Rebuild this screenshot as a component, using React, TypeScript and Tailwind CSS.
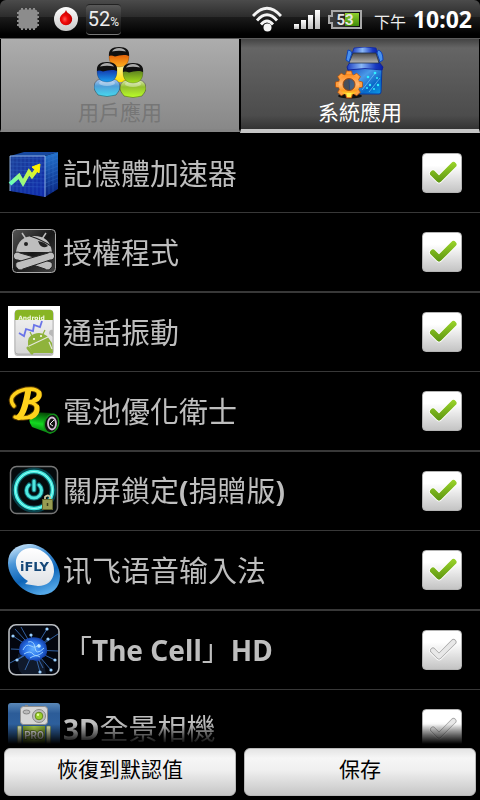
import { useState, type ReactNode } from "react";

const CJK = "font-['Noto_Sans_CJK_TC','Noto_Sans_CJK_SC',sans-serif]";
const LATIN = "font-['Noto_Sans','Open_Sans',sans-serif] font-bold";

/* ---------- Status bar ---------- */

function ChipIcon() {
  const n = [20, 24, 28, 32];
  return (
    <svg viewBox="0 0 22 22" className="size-[22px]" aria-hidden="true">
      <rect x="1.5" y="1.5" width="19" height="19" rx="3" fill="#8c8c8c" />
      {n.map((p) => (
        <g key={p} fill="#8c8c8c">
          <rect x={p - 16} y="0" width="2" height="22" />
          <rect x="0" y={p - 16} width="22" height="2" />
        </g>
      ))}
    </svg>
  );
}

function DropIcon() {
  return (
    <svg viewBox="0 0 24 24" className="size-6" aria-hidden="true">
      <defs>
        <linearGradient id="dropRing" x1="0" y1="0" x2="0" y2="1">
          <stop offset="0" stopColor="#fff" />
          <stop offset="1" stopColor="#c8c8c8" />
        </linearGradient>
        <radialGradient id="dropRed" cx=".4" cy=".6" r=".6">
          <stop offset="0" stopColor="#ff5a55" />
          <stop offset=".4" stopColor="#f00808" />
          <stop offset="1" stopColor="#b80000" />
        </radialGradient>
      </defs>
      <circle cx="12" cy="12" r="12" fill="url(#dropRing)" />
      <path d="M12 3 C12.500 5 14 6 15.500 7 A6.200 6.200 0 1 1 8.500 7 C10 6 11.500 5 12 3Z" fill="url(#dropRed)" />
    </svg>
  );
}

function WifiIcon() {
  return (
    <svg viewBox="0 0 30 27" className="h-[27px] w-[30px]" fill="none" stroke="#f4f4f4" strokeWidth="2.8" aria-hidden="true">
      <path d="M1 10 Q15 -5.500 29 10" />
      <path d="M5 14.500 Q15 3 25 14.500" />
      <path d="M9 18.500 Q15 11.500 21 18.500" />
      <circle cx="15.500" cy="21.500" r="4" fill="#f4f4f4" stroke="none" />
    </svg>
  );
}

function SignalIcon() {
  return (
    <svg viewBox="0 0 26 19" className="h-[19px] w-[26px]" aria-hidden="true">
      <defs>
        <linearGradient id="sig" x1="0" y1="0" x2="0" y2="1">
          <stop offset="0" stopColor="#fff" />
          <stop offset="1" stopColor="#bdbdbd" />
        </linearGradient>
      </defs>
      <g fill="url(#sig)">
        <rect x="0" y="14" width="5" height="5" />
        <rect x="7" y="10" width="5" height="9" />
        <rect x="14" y="5" width="5" height="14" />
        <rect x="21" y="0" width="5" height="19" />
      </g>
    </svg>
  );
}

function BatteryIcon() {
  return (
    <svg viewBox="0 0 34 19" className="h-[19px] w-[34px]" aria-hidden="true">
      <defs>
        <linearGradient id="batG" x1="0" y1="0" x2="0" y2="1">
          <stop offset="0" stopColor="#8ed02e" />
          <stop offset="1" stopColor="#3f8a08" />
        </linearGradient>
        <linearGradient id="batK" x1="0" y1="0" x2="1" y2="0">
          <stop offset="0" stopColor="#444" />
          <stop offset="1" stopColor="#080808" />
        </linearGradient>
      </defs>
      <path d="M4 1 H33 V18 H4 V13 H1 V6 H4Z" fill="url(#batK)" stroke="#a8a8a8" strokeWidth="2" />
      <rect x="17" y="3" width="14" height="13" fill="url(#batG)" />
      <text x="17" y="15" textAnchor="middle" fontSize="15" fontWeight="700" fontFamily="Roboto, sans-serif" fill="#e6e6e6">53</text>
    </svg>
  );
}

function StatusBar() {
  return (
    <header className="flex h-[39px] shrink-0 items-center rounded-t-md border-b border-[#5c5c5c] bg-[linear-gradient(#4b4b4b,#2c2c2c_44%,#1b1b1b_46%,#000_90%)] pr-2 pl-[17px]">
      <ChipIcon />
      <span className="ml-[15px] flex"><DropIcon /></span>
      <span className="ml-2 flex h-[31px] w-[35px] items-baseline justify-center rounded border-t border-b border-t-[#222] border-b-[#777] bg-linear-to-b from-[#5a5a5a] to-[#080808] font-['Roboto',sans-serif] text-xl leading-7 text-[#eee]">
        52<span className="text-xs">%</span>
      </span>
      <div className="ml-auto flex items-center">
        <WifiIcon />
        <span className="ml-3 flex"><SignalIcon /></span>
        <span className="ml-2 flex"><BatteryIcon /></span>
        <span className={`${CJK} ml-3 pt-1 text-base leading-6 text-[#eee]`}>下午</span>
        <span className={`${LATIN} ml-[7px] text-[23px] leading-6 text-white`}>10:02</span>
      </div>
    </header>
  );
}

/* ---------- Tab icons ---------- */

function Person({ x, y, id, id2 }: { x: number; y: number; id: string; id2: string }) {
  return (
    <g transform={`translate(${x} ${y})`}>
      <path d="M7 17 C1 18 0 22 0 26 C1 30 3 31 4 33 Q13 36 22 33 C23 31 25 30 26 26 C26 22 25 18 19 17Z" fill={`url(#${id2})`} stroke="#0006" strokeWidth=".8" />
      <ellipse cx="13" cy="21" rx="8" ry="3" fill="#fff" opacity=".35" />
      <path d="M3 9 Q3 1 13 1 Q23 1 23 9 Q23 20 13 20 Q3 20 3 9Z" fill={`url(#${id})`} stroke="#0005" strokeWidth=".6" />
      <path d="M3 9 Q2 0 13 0 Q24 0 23 9 L20 8 Q14 7.500 9 9.500 Q5 8 3 9Z" fill="#101010" />
      <path d="M6 4.500 Q8 1 13 1 Q18 1 20 4.500 Q13 3 6 4.500Z" fill="#ddd" opacity=".75" />
    </g>
  );
}

function UsersIcon() {
  return (
    <svg viewBox="0 0 52 52" className="size-[52px]" aria-hidden="true">
      <defs>
        <linearGradient id="uo" x1="0" y1="0" x2="0" y2="1"><stop offset=".3" stopColor="#e05a08" /><stop offset="1" stopColor="#ffb01e" /></linearGradient>
        <linearGradient id="uy" x1="0" y1="0" x2="0" y2="1"><stop offset="0" stopColor="#fff3a0" /><stop offset="1" stopColor="#ffe000" /></linearGradient>
        <linearGradient id="ub" x1="0" y1="0" x2="0" y2="1"><stop offset=".3" stopColor="#1230a8" /><stop offset="1" stopColor="#1da0f0" /></linearGradient>
        <linearGradient id="uc" x1="0" y1="0" x2="0" y2="1"><stop offset="0" stopColor="#b8c8ee" /><stop offset=".4" stopColor="#4f9fd8" /><stop offset="1" stopColor="#48d8ee" /></linearGradient>
        <linearGradient id="ug" x1="0" y1="0" x2="0" y2="1"><stop offset=".3" stopColor="#587a20" /><stop offset="1" stopColor="#a4e01c" /></linearGradient>
        <linearGradient id="ul" x1="0" y1="0" x2="0" y2="1"><stop offset="0" stopColor="#dcecb4" /><stop offset=".4" stopColor="#94bf30" /><stop offset="1" stopColor="#baff28" /></linearGradient>
      </defs>
      <path d="M18 18 H33 V35 H18Z" fill="url(#uy)" />
      <g transform="translate(12 0)">
        <path d="M3 9 Q3 1 13 1 Q23 1 23 9 Q23 20 13 20 Q3 20 3 9Z" fill="url(#uo)" stroke="#0005" strokeWidth=".6" />
        <path d="M3 9 Q2 0 13 0 Q24 0 23 9 L20 8 Q14 7.500 9 9.500 Q5 8 3 9Z" fill="#101010" />
        <path d="M6 4.500 Q8 1 13 1 Q18 1 20 4.500 Q13 3 6 4.500Z" fill="#ddd" opacity=".75" />
      </g>
      <Person x={0} y={15} id="ub" id2="uc" />
      <Person x={26} y={16} id="ug" id2="ul" />
    </svg>
  );
}

function TruckGearIcon() {
  const teeth = [0, 45, 90, 135, 180, 225, 270, 315];
  return (
    <svg viewBox="0 0 52 52" className="size-[52px]" aria-hidden="true">
      <defs>
        <linearGradient id="trk" x1="0" y1="0" x2="1" y2="1"><stop offset="0" stopColor="#1440b8" /><stop offset=".4" stopColor="#4a9ae8" /><stop offset=".7" stopColor="#0868c8" /><stop offset="1" stopColor="#0aa0e8" /></linearGradient>
        <linearGradient id="hood" x1="0" y1="0" x2="1" y2="0"><stop offset="0" stopColor="#1a3cc0" /><stop offset=".4" stopColor="#8ab8f6" /><stop offset=".8" stopColor="#1838c0" /><stop offset="1" stopColor="#0820a8" /></linearGradient>
        <linearGradient id="win" x1="0" y1="0" x2="0" y2="1"><stop offset="0" stopColor="#4a4a4a" /><stop offset="1" stopColor="#b4b4b4" /></linearGradient>
        <linearGradient id="gear" x1="0" y1="0" x2="0" y2="1"><stop offset="0" stopColor="#ff8a18" /><stop offset=".5" stopColor="#ffb878" /><stop offset=".8" stopColor="#ff9a20" /><stop offset="1" stopColor="#ffee30" /></linearGradient>
      </defs>
      <path d="M14 20 H48 L47 45 Q47 47 45 47 H16Z" fill="url(#trk)" stroke="#0838a0" />
      <path d="M20 1 Q31 -1 42 1 L44 7 H18Z" fill="url(#hood)" stroke="#1428a0" strokeWidth=".8" />
      <path d="M16 15 H45 L49 20 L48 23 Q31 20 14 23 L13 20Z" fill="url(#hood)" stroke="#0c1c98" strokeWidth=".8" />
      <path d="M19 6 H42 L45 16 H15Z" fill="url(#win)" stroke="#20304a" strokeWidth=".8" />
      <path d="M14 3 Q17 3 18 6 L15 15 L12 13Z M44 3 Q49 4 49 13 L46 15 L43 6Z" fill="#4a92ee" stroke="#1044b8" />
      <path d="M28 43 L42 25 M35 45 L46 31" stroke="#7fd0ff" strokeWidth="1" opacity=".6" />
      <g fill="#30f0ff"><circle cx="41" cy="26" r="1.300" /><circle cx="34" cy="30" r="1.300" /><circle cx="43" cy="31" r="1" /><circle cx="36" cy="38" r="1.200" /><circle cx="44" cy="38" r="1.200" /><circle cx="40" cy="42" r="1" /><circle cx="33" cy="41" r="1" /></g>
      <ellipse cx="16" cy="49" rx="12" ry="2.500" fill="#111" />
      <g fill="url(#gear)">
        {teeth.map((a) => <path key={a} d="M11.500 28 L12.500 24 H17.500 L18.500 28Z" transform={`rotate(${a} 15 37.500)`} fill="#ffa040" stroke="#b84c00" strokeWidth=".7" />)}
        <path fillRule="evenodd" d="M15 27 A10.500 10.500 0 1 0 15 48 A10.500 10.500 0 1 0 15 27Z M15 31.500 A6 6 0 1 1 15 43.500 A6 6 0 1 1 15 31.500Z" />
      </g>
      <circle cx="15" cy="37.500" r="6" fill="#444c58" fillOpacity=".7" stroke="#a84a08" />
      <path d="M12.500 46 H17.500 L17 50 H13Z" fill="#fff04a" />
    </svg>
  );
}

/* ---------- Application icons ---------- */

const iconClass = "size-[52px] shrink-0";

function BoosterIcon() {
  const g = [5, 9, 13, 17, 21, 25, 29, 33];
  return (
    <svg viewBox="0 0 52 52" className={iconClass} aria-hidden="true">
      <defs>
        <linearGradient id="cf" x1="0" y1="0" x2="1" y2="1"><stop offset="0" stopColor="#1c3f96" /><stop offset="1" stopColor="#102cac" /></linearGradient>
        <linearGradient id="cs" x1="0" y1="0" x2="0" y2="1"><stop offset="0" stopColor="#2272cc" /><stop offset="1" stopColor="#08207c" /></linearGradient>
        <linearGradient id="ar" gradientUnits="userSpaceOnUse" x1="2" y1="36" x2="32" y2="20"><stop offset="0" stopColor="#66ffc0" /><stop offset="1" stopColor="#fff200" /></linearGradient>
      </defs>
      <path d="M2 9 L16 5 L50 5 L37 9Z" fill="#1648a0" />
      <path d="M2 9 H37 V50 L2 44Z" fill="url(#cf)" />
      <path d="M37 9 L50 5 V42 L37 50Z" fill="url(#cs)" />
      <g stroke="#4580d8" strokeWidth=".5" opacity=".55">
        {g.map((v) => <path key={v} d={`M${v} 9 V${44 + v / 7} M2 ${v + 6} L37 ${v + 7} L50 ${v + 2}`} fill="none" />)}
        <path d="M41 8 V47 M45 7 V45" />
      </g>
      <path d="M2 44 V9 H37 V50" fill="none" stroke="#9cc0ee" strokeWidth=".9" />
      <path d="M2 37 L11 29 L15 36 L21 25 L24 29 L30 21" fill="none" stroke="url(#ar)" strokeWidth="4" />
      <path d="M24 20 L32 17 L31 26Z" fill="#fff200" stroke="#fff200" />
    </svg>
  );
}

function PirateIcon() {
  return (
    <svg viewBox="0 0 52 52" className={iconClass} aria-hidden="true">
      <defs><linearGradient id="pb" x1="0" y1="0" x2="1" y2="1"><stop offset="0" stopColor="#555" /><stop offset=".5" stopColor="#171717" /><stop offset="1" stopColor="#444" /></linearGradient></defs>
      <rect x="4.500" y="3.500" width="43" height="43" rx="4" fill="url(#pb)" stroke="#aaa" />
      <g stroke="#bebebe" fill="#bebebe">
        <path d="M14 7 L18 13 M38 7 L34 13" strokeWidth="1.500" />
        <path d="M8 26 Q10 10 26 10 Q42 10 44 26Z" stroke="none" />
      </g>
      <path d="M22 10 Q34 14 43 20" stroke="#222" strokeWidth="1.200" fill="none" />
      <path d="M30 15 Q37 16 40 20 Q33 24 30 15Z" fill="#222" />
      <circle cx="18" cy="18" r="2" fill="#222" />
      <g fill="#bebebe" stroke="#252525" strokeWidth="1">
        <path d="M12 27 L43 36 A4 4 0 0 1 43 42 A4 4 0 0 1 37 43 L10 34 A4 4 0 1 1 12 27Z" />
        <path d="M40 27 L9 36 A4 4 0 0 0 9 42 A4 4 0 0 0 15 43 L42 34 A4 4 0 1 0 40 27Z" />
      </g>
    </svg>
  );
}

function VibrateIcon() {
  return (
    <svg viewBox="0 0 52 52" className={iconClass} aria-hidden="true">
      <defs><linearGradient id="vb" x1="0" y1="0" x2="0" y2="1"><stop offset="0" stopColor="#f4f4f4" /><stop offset="1" stopColor="#d6d6d6" /></linearGradient></defs>
      <rect width="52" height="52" fill="#fff" />
      <rect x="6.500" y="5" width="39" height="45" rx="3" fill="#9a9a9a" opacity=".6" />
      <rect x="7" y="4" width="38" height="44" rx="3" fill="url(#vb)" stroke="#999" strokeWidth=".6" />
      <path d="M7 14 V7 Q7 4 10 4 H42 Q45 4 45 7 V14Z" fill="#88b524" />
      <text x="23.500" y="13.500" textAnchor="middle" fontSize="6" fontWeight="700" fontFamily="DejaVu Sans, sans-serif" fill="#f2f8e0">Android</text>
      <path d="M11 27 L16 30 L18 23 L25 25 L26 19 L32 21 L34 15" fill="none" stroke="#6a74e8" strokeWidth="1.800" />
      <path d="M41 28 Q41 23 45 24 V31Z" fill="#b8b8b8" />
      <g fill="#8fb33c">
        <path d="M20 39 Q19 30 26 28 Q33 25 39 30 L44 37 L45 47 H25Z" />
        <path d="M24 30 L22 26 M35 28 L37 24" stroke="#8fb33c" strokeWidth="1.200" />
        <path d="M20 42 L24 47" stroke="#8fb33c" strokeWidth="3" strokeLinecap="round" />
      </g>
      <path d="M21 40 L40 31 M41 36 L44 43" stroke="#e4e8dc" strokeWidth="1.200" />
      <circle cx="26" cy="33" r="1" fill="#fff" /><circle cx="33" cy="30" r="1" fill="#fff" />
    </svg>
  );
}

function BatteryGuardIcon() {
  return (
    <svg viewBox="0 0 52 52" className={iconClass} aria-hidden="true">
      <defs><linearGradient id="bg" x1=".3" y1="0" x2=".1" y2="1"><stop offset="0" stopColor="#064c06" /><stop offset=".5" stopColor="#12d820" /><stop offset="1" stopColor="#045c08" /></linearGradient></defs>
      <path d="M23 27 L43 28 L50 35 L43 49 L24 42 Q19 35 23 27Z" fill="url(#bg)" />
      <ellipse cx="43.500" cy="38.500" rx="7" ry="9.500" transform="rotate(15 43.500 38.500)" fill="#111" stroke="#118c18" strokeWidth="1.500" />
      <ellipse cx="44" cy="38.500" rx="4" ry="6" fill="none" stroke="#d8bfd8" strokeWidth="1.800" />
      <path d="M46 35 L42 39 L45 41" stroke="#eee" fill="none" />
      <g fill="none" strokeLinecap="round">
        <path d="M6 21 C-2 12 10 4 23 4 C37 5 32 17 20 17 C35 18 29 33 15 33 Q9 33 7 32" stroke="#5a3a00" strokeWidth="5.500" />
        <path d="M6 21 C-2 12 10 4 23 4 C37 5 32 17 20 17 C35 18 29 33 15 33 Q9 33 7 32" stroke="#ffd21c" strokeWidth="3.500" />
        <path d="M31 8 Q32 13 27 15 M29 22 Q30 29 23 32" stroke="#ffd21c" strokeWidth="5" />
        <path d="M20 7 C18 18 16 28 11 32" stroke="#ffd21c" strokeWidth="6" />
      </g>
    </svg>
  );
}

function ScreenLockIcon() {
  return (
    <svg viewBox="0 0 52 52" className={iconClass} aria-hidden="true">
      <rect x="2.500" y="1.500" width="47" height="47" rx="6" fill="#050a0c" stroke="#777" strokeWidth="1.500" />
      <circle cx="26" cy="25" r="19" fill="none" stroke="#0a5a66" strokeWidth="7" opacity=".7" />
      <circle cx="26" cy="25" r="18.500" fill="none" stroke="#3ce6dc" strokeWidth="3.500" />
      <circle cx="26" cy="25" r="18.500" fill="none" stroke="#9afff6" strokeWidth="1" />
      <g fill="none" strokeLinecap="round">
        <path d="M21 20 A7.500 7.500 0 1 0 31 20 M26 16 V25" stroke="#0a6670" strokeWidth="5" />
        <path d="M21 20 A7.500 7.500 0 1 0 31 20 M26 16 V25" stroke="#50e8e0" strokeWidth="3" />
      </g>
      <path d="M37 35 V32 Q40 29 42 32 V35" fill="none" stroke="#c6c6a0" strokeWidth="1.800" />
      <rect x="34.500" y="34.500" width="10" height="10" fill="#989d52" stroke="#62672e" />
      <path d="M39.500 38 V41" stroke="#3a3c1a" strokeWidth="1.500" />
    </svg>
  );
}

function FlyIcon() {
  return (
    <svg viewBox="0 0 52 52" className={iconClass} aria-hidden="true">
      <defs>
        <linearGradient id="fb" x1=".2" y1="0" x2=".6" y2="1"><stop offset="0" stopColor="#c9e4f8" /><stop offset=".3" stopColor="#4b96d8" /><stop offset=".65" stopColor="#0e65b8" /><stop offset="1" stopColor="#54a8e8" /></linearGradient>
        <linearGradient id="fw" x1="0" y1="0" x2="0" y2="1"><stop offset="0" stopColor="#fff" /><stop offset="1" stopColor="#dfe2e6" /></linearGradient>
      </defs>
      <path d="M20 0 C34 -1 51 15 52 32 C52 44 44 51 32 51 C15 50 0 34 0 19 C0 7 8 1 20 0Z" fill="url(#fb)" />
      <path d="M23 4 C36 4 47 16 46 28 C45 37 39 42 30 42 L17 40 L20 37 C11 32 7 23 8 16 C10 8 16 4 23 4Z" fill="url(#fw)" />
      <text x="26.500" y="27" textAnchor="middle" fontSize="13" fontWeight="700" fontFamily="DejaVu Sans, sans-serif" fill="#164878">iFLY</text>
    </svg>
  );
}

function CellIcon() {
  const rays = [[5, 12], [13, 3], [23, 11], [39, 5], [40, 15], [50, 10], [3, 25], [2, 39], [9, 36], [17, 46], [32, 48], [35, 44], [43, 46], [47, 36], [50, 27], [7, 5]];
  return (
    <svg viewBox="0 0 52 52" className={iconClass} aria-hidden="true">
      <defs><radialGradient id="br"><stop offset="0" stopColor="#62b0ff" /><stop offset=".6" stopColor="#2a74ec" /><stop offset="1" stopColor="#1440a8" /></radialGradient></defs>
      <rect x="1" y="0.800" width="50" height="50" rx="7" fill="#03060e" stroke="#b8bcc0" strokeWidth="1.600" />
      <path d="M10 30 Q8 45 14 50 H38 L35 35Z" fill="#101a2c" />
      {rays.map(([x, y]) => <path key={`${x}-${y}`} d={`M26 26 L${x} ${y}`} stroke="#3f78c8" strokeWidth=".8" />)}
      <g fill="#9ad0ff">{[[5, 12], [23, 11], [40, 15], [9, 36], [32, 48], [43, 46], [47, 36], [39, 5]].map(([x, y]) => <circle key={`${x}-${y}`} cx={x} cy={y} r="1.600" />)}</g>
      <path d="M11 27 Q11 18 18 15 Q24 12 31 14 Q39 17 39 25 Q40 32 34 34 Q31 39 25 36 Q19 37 17 32 Q11 32 11 27Z" fill="url(#br)" />
      <path d="M15 26 Q18 19 23 22 T31 20 M16 30 Q22 26 25 30 T35 28 M22 34 Q28 30 32 33 M20 18 Q26 16 27 24 T36 24" fill="none" stroke="#a6d8ff" strokeWidth=".9" />
      <circle cx="31" cy="22" r="1.800" fill="#c4ecff" />
    </svg>
  );
}

function PanoramaIcon() {
  return (
    <svg viewBox="0 0 52 52" className={iconClass} aria-hidden="true">
      <defs>
        <linearGradient id="pn" x1="0" y1="0" x2="0" y2="1"><stop offset="0" stopColor="#5a88b8" /><stop offset=".2" stopColor="#2c5c98" /><stop offset="1" stopColor="#3168a8" /></linearGradient>
        <linearGradient id="pg" x1="0" y1="0" x2="1" y2="0"><stop offset="0" stopColor="#7fa32c" /><stop offset=".5" stopColor="#b2d650" /><stop offset="1" stopColor="#7fa32c" /></linearGradient>
      </defs>
      <rect width="52" height="52" rx="3" fill="url(#pn)" />
      <path d="M17 4 V2 H20 V4" fill="#888" />
      <rect x="12.500" y="3.500" width="27" height="18" rx="3" fill="#d6d6d6" stroke="#8e8e8e" />
      <ellipse cx="18.500" cy="9" rx="3.500" ry="2" fill="#bbb" stroke="#777" strokeWidth=".8" />
      <circle cx="31" cy="13" r="6.500" fill="#bdbdbd" stroke="#888" />
      <circle cx="31" cy="13" r="3.800" fill="#9ad02c" stroke="#668820" />
      <circle cx="30" cy="11.800" r="1.200" fill="#e4ffa0" />
      <rect x="15" y="23" width="22" height="25" fill="url(#pg)" />
      <rect x="9.500" y="23" width="4" height="25" rx="1" fill="#e4eab8" stroke="#7a8c40" strokeWidth=".6" />
      <rect x="38.500" y="23" width="4" height="25" rx="1" fill="#e4eab8" stroke="#7a8c40" strokeWidth=".6" />
      <text x="26" y="36" textAnchor="middle" fontSize="10" fontWeight="700" fontFamily="Roboto, sans-serif" fill="#fff" stroke="#5b6b2a" strokeWidth="1.500" paintOrder="stroke">PRO</text>
    </svg>
  );
}

/* ---------- List ---------- */

type AppEntry = { name: string; icon: ReactNode; checked: boolean };

const APPS: AppEntry[] = [
  { name: "記憶體加速器", icon: <BoosterIcon />, checked: true },
  { name: "授權程式", icon: <PirateIcon />, checked: true },
  { name: "通話振動", icon: <VibrateIcon />, checked: true },
  { name: "電池優化衛士", icon: <BatteryGuardIcon />, checked: true },
  { name: "關屏鎖定(捐贈版)", icon: <ScreenLockIcon />, checked: true },
  { name: "讯飞语音输入法", icon: <FlyIcon />, checked: true },
  { name: "「The Cell」HD", icon: <CellIcon />, checked: false },
  { name: "3D全景相機", icon: <PanoramaIcon />, checked: false },
];

/* Latin runs are bold; Chinese runs keep the regular weight. */
function MixedText({ text }: { text: string }) {
  return text.split(/([A-Za-z0-9() ]+)/).map((part, i) =>
    i % 2 === 1 ? <span key={i} className={`${LATIN} text-[28px]`}>{part}</span> : part,
  );
}

function CheckMark({ on }: { on: boolean }) {
  const d = "M11 20.500 L17 26.500 L31.500 12";
  return (
    <svg viewBox="0 0 40 40" className="pointer-events-none size-10 [grid-area:1/1]" fill="none" strokeLinecap="round" strokeLinejoin="round" aria-hidden="true">
      <defs><linearGradient id="ck" gradientUnits="userSpaceOnUse" x1="0" y1="9" x2="0" y2="30"><stop offset="0" stopColor="#9ad42a" /><stop offset="1" stopColor="#5c9410" /></linearGradient></defs>
      <path d={d} stroke="#fff" strokeWidth="7.500" />
      <path d={d} stroke={on ? "url(#ck)" : "#a8a8a8"} strokeWidth="6" />
      {!on && <path d={d} stroke="#e8e8e8" strokeWidth="4.400" />}
    </svg>
  );
}

function AppRow({ app, thick }: { app: AppEntry; thick: boolean }) {
  const [on, setOn] = useState(app.checked);
  return (
    <li className={`border-[#383838] ${thick ? "border-b-2" : "border-b"}`}>
      <label className="flex h-[78px] items-center pr-[18px] pl-2">
        {app.icon}
        <span className={`${CJK} ml-[3px] flex-1 pb-0.5 text-[29px] leading-9 whitespace-nowrap text-[#bebebe]`}>
          <MixedText text={app.name} />
        </span>
        <span className="grid size-10">
          <input
            type="checkbox"
            checked={on}
            onChange={() => setOn(!on)}
            className="size-10 appearance-none rounded border border-[#b4b4b4] bg-linear-to-b from-white from-30% to-[#c4c4c4] [grid-area:1/1]"
          />
          <CheckMark on={on} />
        </span>
      </label>
    </li>
  );
}

const actionClass =
  "h-12 flex-1 rounded-md border border-[#b8b8b8] bg-[linear-gradient(#e4e4e4,#f6f6f6_20%,#f0f0f0_45%,#c6c6c6)] pb-2 text-[21px] leading-7 text-black";

export default function App() {
  return (
    <div className={`${CJK} flex h-screen flex-col overflow-hidden bg-black`} lang="zh-Hant">
      <StatusBar />
      <div role="tablist" className="flex h-[95px] shrink-0">
        <button type="button" role="tab" aria-selected="false" className="mb-0.5 flex flex-1 flex-col items-center justify-start border-x border-b-3 border-x-black border-b-[#858585] bg-linear-to-b from-[#adadad] to-[#888] pt-2 text-[21px] leading-6 text-[#767676]">
          <UsersIcon />
          用戶應用
        </button>
        <button type="button" role="tab" aria-selected="true" className="mb-px flex flex-1 flex-col items-center justify-start border-x border-b-4 border-x-black border-b-[#c6c6c6] bg-[linear-gradient(#444,#656565_10%,#4c4c4c_85%,#333)] pt-2 text-[21px] leading-6 text-white">
          <TruckGearIcon />
          系統應用
        </button>
      </div>
      <ul className="min-h-0 flex-1 overflow-y-auto [scrollbar-width:none] [mask-image:linear-gradient(#000_calc(100%-20px),transparent)]">
        {APPS.map((app, i) => <AppRow key={app.name} app={app} thick={i % 2 === 1} />)}
      </ul>
      <footer className="flex shrink-0 gap-2 px-1 pt-1 pb-1">
        <button type="button" className={actionClass}>恢復到默認值</button>
        <button type="button" className={actionClass}>保存</button>
      </footer>
    </div>
  );
}
